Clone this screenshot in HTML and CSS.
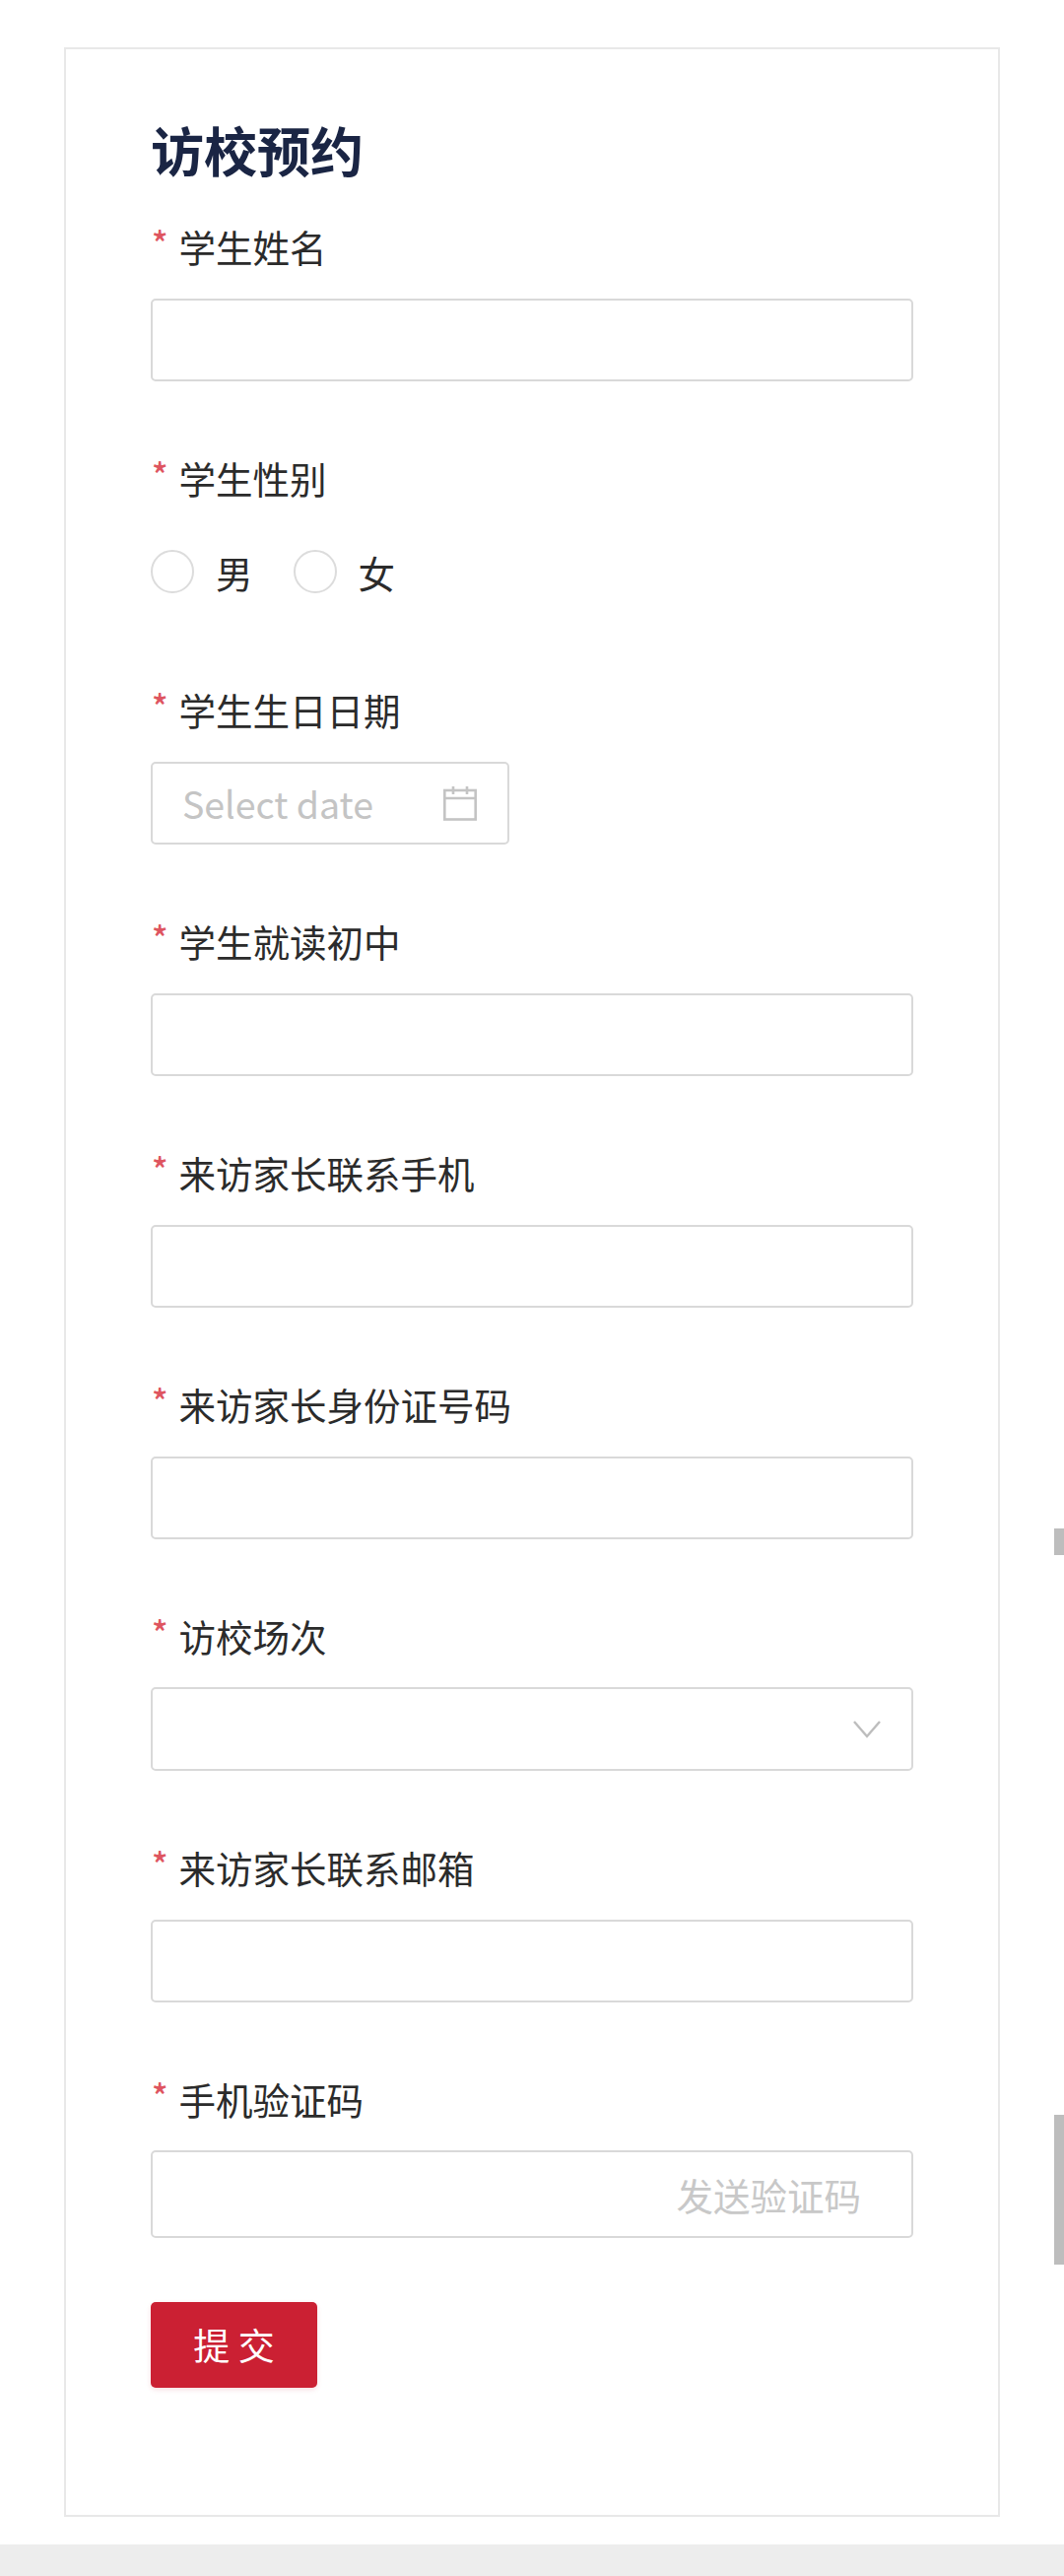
FILE: index.html
```html
<!DOCTYPE html>
<html lang="zh-CN">
<head>
  <meta charset="UTF-8" />
  <meta name="viewport" content="width=device-width, initial-scale=1.0" />
  <title>访校预约</title>
  <link rel="stylesheet" href="styles.css">
</head>
<body>
  <main class="page">
    <form class="card">
      <h1 class="title">访校预约</h1>

      <div class="form-item">
        <label class="form-label"><span class="star">*</span>学生姓名</label>
        <input class="text-input" type="text" />
      </div>

      <div class="form-item">
        <label class="form-label"><span class="star">*</span>学生性别</label>
        <div class="radio-group">
          <span class="radio-option"><span class="radio"></span>男</span>
          <span class="radio-option"><span class="radio"></span>女</span>
        </div>
      </div>

      <div class="form-item">
        <label class="form-label"><span class="star">*</span>学生生日日期</label>
        <div class="text-input date-input">
          <span class="placeholder">Select date</span>
          <svg class="calendar-icon" viewBox="0 0 34 36" fill="none" stroke="#c4c4c4" stroke-width="2.6">
            <rect x="1.3" y="5" width="31.4" height="29.5" />
            <path d="M1.3 13h31.4M10 1v8M24 1v8" />
          </svg>
        </div>
      </div>

      <div class="form-item">
        <label class="form-label"><span class="star">*</span>学生就读初中</label>
        <input class="text-input" type="text" />
      </div>

      <div class="form-item">
        <label class="form-label"><span class="star">*</span>来访家长联系手机</label>
        <input class="text-input" type="text" />
      </div>

      <div class="form-item">
        <label class="form-label"><span class="star">*</span>来访家长身份证号码</label>
        <input class="text-input" type="text" />
      </div>

      <div class="form-item">
        <label class="form-label"><span class="star">*</span>访校场次</label>
        <div class="text-input select-input">
          <svg class="chevron-icon" viewBox="0 0 28 18" fill="none" stroke="#bdbdbd" stroke-width="2.4">
            <path d="M1 1l13 15L27 1" />
          </svg>
        </div>
      </div>

      <div class="form-item">
        <label class="form-label"><span class="star">*</span>来访家长联系邮箱</label>
        <input class="text-input" type="text" />
      </div>

      <div class="form-item form-item-last">
        <label class="form-label"><span class="star">*</span>手机验证码</label>
        <div class="text-input code-input">
          <span class="send-code">发送验证码</span>
        </div>
      </div>

      <button class="submit-btn" type="button">提 交</button>
    </form>
  </main>
  <div class="footer-bar"></div>

  <!-- scrollbar fragments at the right edge of the capture -->
  <div class="scroll-mark scroll-mark-small"></div>
  <div class="scroll-mark scroll-mark-large"></div>
</body>
</html>
```

FILE: styles.css
```css
* {
  box-sizing: border-box;
}
html, body {
  margin: 0;
  padding: 0;
}
body {
  position: relative;
  height: 2614px;
  background: #ffffff;
  font-family: "Noto Sans CJK SC", "Noto Sans", sans-serif;
  color: #2b2b2b;
  display: flex;
  flex-direction: column;
  overflow: hidden;
}
.page {
  flex: 1;
  padding: 48px 65px 27px;
}
.card {
  width: 950px;
  height: 2506px;
  padding: 67px 86px 0;
  background: #ffffff;
  border: 2px solid #e8e8e8;
}
.title {
  margin: 0 0 39px;
  font-size: 54px;
  line-height: 70px;
  font-weight: 700;
  color: #1a2544;
}
.form-item {
  height: 235px;
}
.form-label {
  display: flex;
  height: 51px;
  margin-bottom: 26px;
  font-size: 37.5px;
  line-height: 48px;
}
.star {
  width: 28.5px;
  padding-left: 1px;
  font-size: 34px;
  line-height: 40px;
  font-weight: 500;
  color: #de5560;
}
.text-input {
  display: flex;
  align-items: center;
  width: 774px;
  height: 84px;
  padding: 0;
  background: #ffffff;
  border: 2px solid #d9d9d9;
  border-radius: 5px;
  outline: none;
}
.radio-group {
  display: flex;
  align-items: center;
  gap: 41px;
  height: 84px;
  font-size: 37.5px;
}
.radio-option {
  display: flex;
  align-items: center;
  gap: 22px;
}
.radio {
  width: 44px;
  height: 44px;
  border: 2px solid #dcdcdc;
  border-radius: 50%;
}
.date-input {
  width: 364px;
  justify-content: space-between;
  padding: 0 31px 0 30px;
}
.placeholder {
  font-size: 37.5px;
  line-height: 50px;
  color: #c4c4c4;
}
.calendar-icon {
  width: 34px;
  height: 36px;
}
.select-input {
  height: 85px;
  margin-top: -1px;
  justify-content: flex-end;
  padding-right: 31px;
}
.chevron-icon {
  width: 28px;
  height: 18px;
}
.code-input {
  height: 89px;
  margin-top: -1px;
  justify-content: flex-end;
  padding-right: 51px;
}
.send-code {
  font-size: 37.5px;
  color: #c8c8c8;
}
.form-item-last {
  height: 229.5px;
}
.submit-btn {
  display: block;
  width: 169px;
  height: 87px;
  padding: 0;
  background: #cb2033;
  border: none;
  border-radius: 5px;
  box-shadow: 0 2px 5px rgba(203, 32, 51, 0.15);
  font-family: inherit;
  font-size: 37px;
  color: #ffffff;
}
.footer-bar {
  height: 32px;
  background: #ededed;
}
.scroll-mark {
  position: absolute;
  right: 0;
  width: 10px;
  background: #bdbdbd;
}
.scroll-mark-small {
  top: 1551px;
  height: 27px;
}
.scroll-mark-large {
  top: 2146px;
  height: 152px;
}
```
